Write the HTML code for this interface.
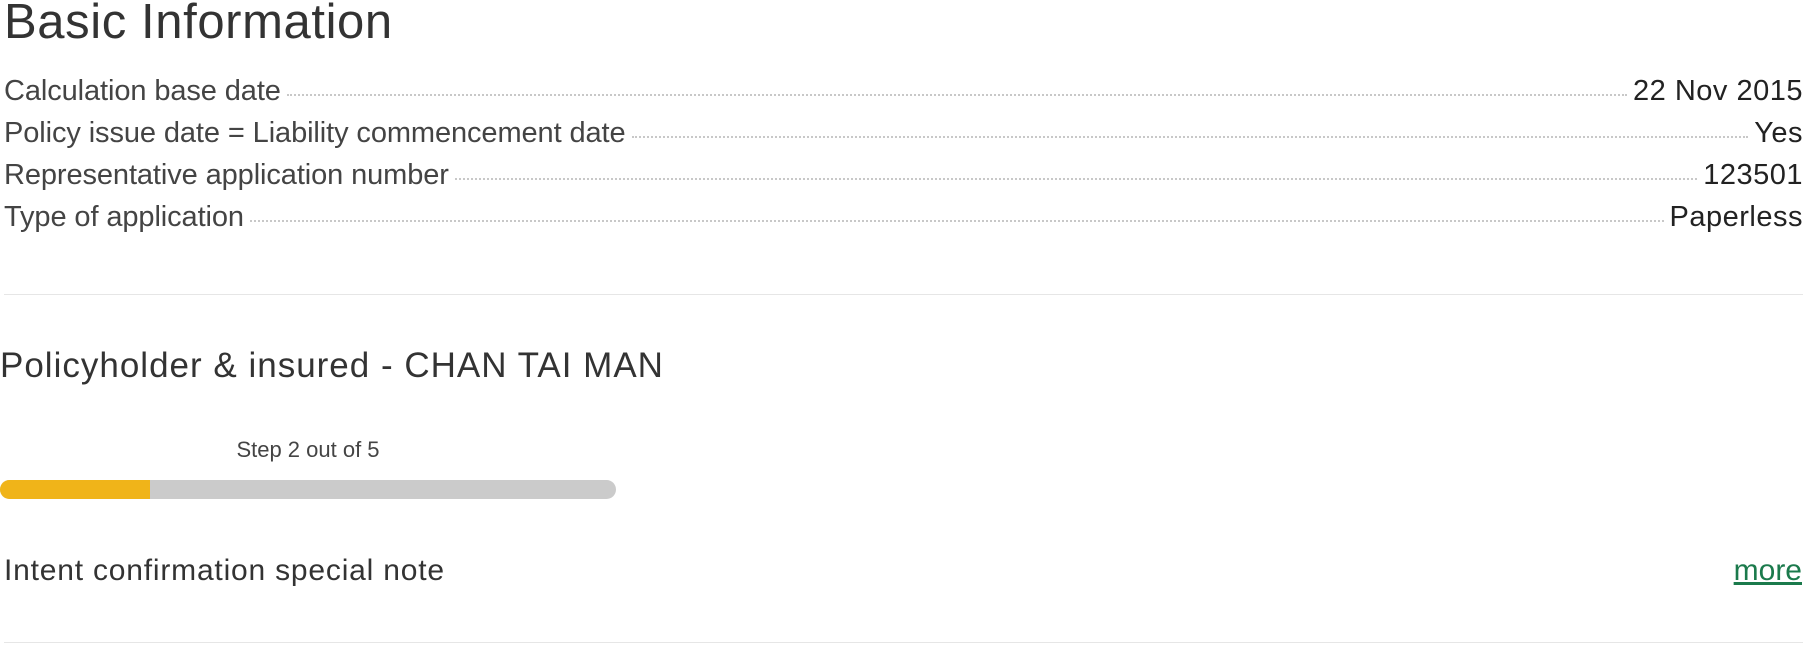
<!DOCTYPE html>
<html><head><meta charset="utf-8"><style>
html,body{margin:0;padding:0;background:#fff;width:1803px;height:647px;overflow:hidden;font-family:"Liberation Sans",sans-serif;color:#333}
.t{position:absolute;left:4px;top:-6px;font-size:49px;color:#333;letter-spacing:0.6px;white-space:nowrap}
.row{position:absolute;left:4px;width:1799px;display:flex;align-items:baseline;font-size:29px;height:40px;white-space:nowrap}
.row .l{color:#444;letter-spacing:-0.1px}
.row .d{flex:1;border-bottom:2px dotted #c8c8c8;margin:0 6px;position:relative;top:-4px}
.row .v{color:#222;letter-spacing:0.5px}
.hr{position:absolute;left:4px;width:1799px;height:1px;background:#e6e6e6}
.h2{position:absolute;left:0;top:346px;font-size:35px;color:#333;white-space:nowrap;letter-spacing:1px}
.step{position:absolute;left:0;width:616px;text-align:center;top:437px;font-size:22px;color:#444}
.bar{position:absolute;left:0;top:480px;width:616px;height:19px;border-radius:10px;background:#cbcbcb;overflow:hidden}
.bar i{display:block;width:150px;height:100%;background:#f0b419}
.note{position:absolute;left:4px;top:554px;font-size:30px;color:#333;letter-spacing:0.8px}
.more{position:absolute;right:1px;top:554px;font-size:30px;color:#1b7a4c;text-decoration:underline}
</style></head><body>
<div class="t">Basic Information</div>
<div class="row" style="top:75px"><span class="l">Calculation base date</span><span class="d"></span><span class="v">22 Nov 2015</span></div>
<div class="row" style="top:117px"><span class="l">Policy issue date = Liability commencement date</span><span class="d"></span><span class="v">Yes</span></div>
<div class="row" style="top:159px"><span class="l">Representative application number</span><span class="d"></span><span class="v">123501</span></div>
<div class="row" style="top:201px"><span class="l">Type of application</span><span class="d"></span><span class="v">Paperless</span></div>
<div class="hr" style="top:294px"></div>
<div class="h2">Policyholder &amp; insured - CHAN TAI MAN</div>
<div class="step">Step 2 out of 5</div>
<div class="bar"><i></i></div>
<div class="note">Intent confirmation special note</div>
<div class="more">more</div>
<div class="hr" style="top:642px"></div>
</body></html>
